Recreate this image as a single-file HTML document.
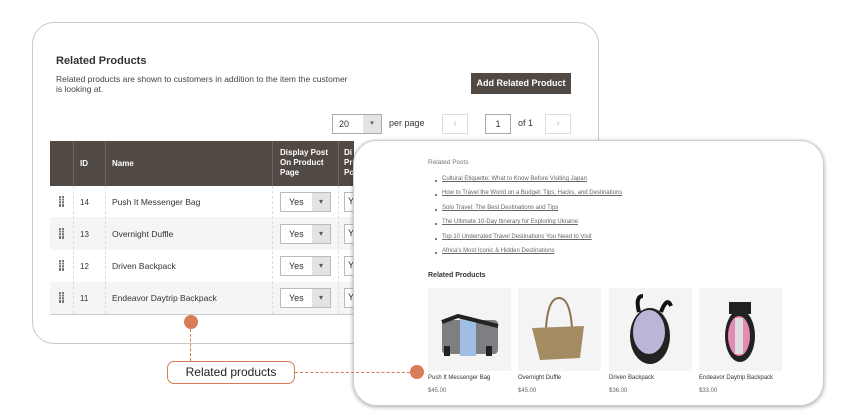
<!DOCTYPE html>
<html><head><meta charset="utf-8"><style>
*{margin:0;padding:0;box-sizing:border-box}
body{width:850px;height:420px;background:#fff;font-family:"Liberation Sans",sans-serif;position:relative;overflow:hidden;color:#333}
.a{position:absolute}
.p1{left:32px;top:22px;width:567px;height:322px;border:1px solid #c9c9c9;border-radius:22px;background:#fff}
.th{background:#514943;color:#fff;font-weight:bold;font-size:8px}
.sel{position:absolute;width:51px;height:20px;border:1px solid #bbb;background:#fff;font-size:9px;line-height:18px;padding-left:8px}
.sel:after{content:"▾";position:absolute;right:0;top:0;width:18px;height:18px;background:#e3e3e3;text-align:center;font-size:8px;color:#555}
.p2{left:353px;top:140px;width:471px;height:266px;border-radius:24px;background:#fff;box-shadow:0 1px 4px rgba(0,0,0,.35);border:1px solid #ccc}
.lk{position:absolute;left:442px;font-size:6px;color:#666;text-decoration:underline}
.bl{position:absolute;left:435px;width:2px;height:2px;background:#555;border-radius:50%}
.img{position:absolute;top:288px;width:83px;height:83px;background:#f4f4f4}
.pn{position:absolute;top:375px;font-size:6px;color:#333}
.pp{position:absolute;top:388px;font-size:6px;color:#666}
.dot{position:absolute;width:14px;height:14px;border-radius:50%;background:#d67c56}
.dr{position:absolute;left:59px}
</style></head><body>
<div class="a p1"></div>
<div class="a" style="left:56px;top:55px;font-size:11px;font-weight:bold;color:#333">Related Products</div>
<div class="a" style="left:56px;top:74px;font-size:8.5px;color:#444;line-height:10px;width:296px">Related products are shown to customers in addition to the item the customer is looking at.</div>
<div class="a" style="left:471px;top:73px;width:100px;height:21px;background:#514943;color:#fff;font-size:9px;font-weight:bold;text-align:center;line-height:21px">Add Related Product</div>
<div class="a" style="left:332px;top:114px;width:50px;height:20px;border:1px solid #aaa;font-size:9px;line-height:18px;padding-left:6px">20<span class="a" style="right:0;top:0;width:18px;height:18px;background:#e3e3e3;text-align:center;font-size:7px;color:#555">▾</span></div>
<div class="a" style="left:389px;top:118px;font-size:9px">per page</div>
<div class="a" style="left:442px;top:114px;width:26px;height:20px;border:1px solid #ddd;color:#bbb;text-align:center;line-height:18px;font-size:10px">‹</div>
<div class="a" style="left:485px;top:114px;width:26px;height:20px;border:1px solid #aaa;text-align:center;line-height:18px;font-size:9px">1</div>
<div class="a" style="left:518px;top:118px;font-size:9px">of 1</div>
<div class="a" style="left:545px;top:114px;width:26px;height:20px;border:1px solid #ddd;color:#bbb;text-align:center;line-height:18px;font-size:10px">›</div>
<div class="a th" style="left:50px;top:141px;width:304px;height:45px"></div>
<div class="a" style="left:73px;top:141px;width:1px;height:45px;background:#6d655f"></div>
<div class="a" style="left:105px;top:141px;width:1px;height:45px;background:#6d655f"></div>
<div class="a" style="left:272px;top:141px;width:1px;height:45px;background:#6d655f"></div>
<div class="a" style="left:338px;top:141px;width:1px;height:45px;background:#6d655f"></div>
<div class="a th" style="left:80px;top:159px">ID</div>
<div class="a th" style="left:112px;top:159px">Name</div>
<div class="a th" style="left:280px;top:148px;line-height:10px">Display Post<br>On Product<br>Page</div>
<div class="a th" style="left:344px;top:148px;line-height:10px">Di<br>Pr<br>Po</div>
<div class="a" style="left:50px;top:217px;width:304px;height:33px;background:#f5f5f5"></div>
<div class="a" style="left:50px;top:282px;width:304px;height:32px;background:#f5f5f5"></div>
<div class="a" style="left:50px;top:314px;width:304px;height:1px;background:#ccc"></div>
<div class="a" style="left:73px;top:186px;width:0;height:128px;border-left:1px dashed #ddd"></div>
<div class="a" style="left:105px;top:186px;width:0;height:128px;border-left:1px dashed #ddd"></div>
<div class="a" style="left:272px;top:186px;width:0;height:128px;border-left:1px dashed #ddd"></div>
<div class="a" style="left:338px;top:186px;width:0;height:128px;border-left:1px dashed #ddd"></div>
<svg class="dr" style="top:196px" width="5" height="11"><g fill="#777"><rect x="0" y="0" width="2" height="11"/><rect x="3" y="0" width="2" height="11"/></g><g fill="#fff"><rect x="0" y="2" width="5" height="0.6"/><rect x="0" y="4.5" width="5" height="0.6"/><rect x="0" y="7" width="5" height="0.6"/></g></svg>
<svg class="dr" style="top:228px" width="5" height="11"><g fill="#777"><rect x="0" y="0" width="2" height="11"/><rect x="3" y="0" width="2" height="11"/></g><g fill="#f5f5f5"><rect x="0" y="2" width="5" height="0.6"/><rect x="0" y="4.5" width="5" height="0.6"/><rect x="0" y="7" width="5" height="0.6"/></g></svg>
<svg class="dr" style="top:260px" width="5" height="11"><g fill="#777"><rect x="0" y="0" width="2" height="11"/><rect x="3" y="0" width="2" height="11"/></g><g fill="#fff"><rect x="0" y="2" width="5" height="0.6"/><rect x="0" y="4.5" width="5" height="0.6"/><rect x="0" y="7" width="5" height="0.6"/></g></svg>
<svg class="dr" style="top:292px" width="5" height="11"><g fill="#777"><rect x="0" y="0" width="2" height="11"/><rect x="3" y="0" width="2" height="11"/></g><g fill="#f5f5f5"><rect x="0" y="2" width="5" height="0.6"/><rect x="0" y="4.5" width="5" height="0.6"/><rect x="0" y="7" width="5" height="0.6"/></g></svg>
<div class="a" style="left:80px;top:198px;font-size:8px">14</div>
<div class="a" style="left:80px;top:230px;font-size:8px">13</div>
<div class="a" style="left:80px;top:262px;font-size:8px">12</div>
<div class="a" style="left:80px;top:294px;font-size:8px">11</div>
<div class="a" style="left:112px;top:197px;font-size:8.5px">Push It Messenger Bag</div>
<div class="a" style="left:112px;top:229px;font-size:8.5px">Overnight Duffle</div>
<div class="a" style="left:112px;top:261px;font-size:8.5px">Driven Backpack</div>
<div class="a" style="left:112px;top:293px;font-size:8.5px">Endeavor Daytrip Backpack</div>
<div class="sel" style="left:280px;top:192px">Yes</div>
<div class="sel" style="left:280px;top:224px">Yes</div>
<div class="sel" style="left:280px;top:256px">Yes</div>
<div class="sel" style="left:280px;top:288px">Yes</div>
<div class="a" style="left:344px;top:192px;width:20px;height:20px;border:1px solid #bbb;background:#fff;font-size:9px;padding:3px 0 0 3px">Y</div>
<div class="a" style="left:344px;top:224px;width:20px;height:20px;border:1px solid #bbb;background:#fff;font-size:9px;padding:3px 0 0 3px">Y</div>
<div class="a" style="left:344px;top:256px;width:20px;height:20px;border:1px solid #bbb;background:#fff;font-size:9px;padding:3px 0 0 3px">Y</div>
<div class="a" style="left:344px;top:288px;width:20px;height:20px;border:1px solid #bbb;background:#fff;font-size:9px;padding:3px 0 0 3px">Y</div>

<div class="a p2"></div>
<div class="a" style="left:428px;top:159px;font-size:6.5px;color:#777">Related Posts</div>
<div class="bl" style="top:180px"></div><div class="lk" style="top:176px">Cultural Etiquette: What to Know Before Visiting Japan</div>
<div class="bl" style="top:194px"></div><div class="lk" style="top:190px">How to Travel the World on a Budget: Tips, Hacks, and Destinations</div>
<div class="bl" style="top:209px"></div><div class="lk" style="top:205px">Solo Travel: The Best Destinations and Tips</div>
<div class="bl" style="top:223px"></div><div class="lk" style="top:219px">The Ultimate 10-Day Itinerary for Exploring Ukraine</div>
<div class="bl" style="top:238px"></div><div class="lk" style="top:234px">Top 10 Underrated Travel Destinations You Need to Visit</div>
<div class="bl" style="top:252px"></div><div class="lk" style="top:248px">Africa's Most Iconic &amp; Hidden Destinations</div>
<div class="a" style="left:428px;top:272px;font-size:7px;font-weight:bold;color:#333">Related Products</div>

<div class="img" style="left:428px"><svg width="83" height="83"><rect x="14" y="32" width="56" height="34" rx="4" fill="#7d7f82"/><rect x="32" y="30" width="16" height="38" fill="#9fc0e4"/><rect x="16" y="58" width="6" height="10" fill="#222"/><rect x="58" y="58" width="6" height="10" fill="#222"/><path d="M14 34 L30 28 L70 38" stroke="#222" stroke-width="4" fill="none"/></svg></div>
<div class="img" style="left:518px"><svg width="83" height="83"><path d="M28 40 Q30 10 41 10 Q52 10 54 40" stroke="#8a7350" stroke-width="2" fill="none"/><path d="M14 40 L66 38 L62 70 L22 72 Z" fill="#a38c62"/></svg></div>
<div class="img" style="left:609px"><svg width="83" height="83"><path d="M30 24 Q26 8 34 8 M52 24 Q58 8 62 18" stroke="#111" stroke-width="4" fill="none"/><ellipse cx="41" cy="48" rx="20" ry="28" fill="#222"/><ellipse cx="40" cy="44" rx="16" ry="22" fill="#b9b6d6"/></svg></div>
<div class="img" style="left:699px"><svg width="83" height="83"><rect x="30" y="14" width="22" height="12" fill="#222"/><ellipse cx="41" cy="48" rx="15" ry="26" fill="#222"/><ellipse cx="40" cy="48" rx="11" ry="20" fill="#e48ab0"/><rect x="36" y="30" width="8" height="36" fill="#ddd"/></svg></div>
<div class="pn" style="left:428px">Push It Messenger Bag</div><div class="pp" style="left:428px">$45.00</div>
<div class="pn" style="left:518px">Overnight Duffle</div><div class="pp" style="left:518px">$45.00</div>
<div class="pn" style="left:609px">Driven Backpack</div><div class="pp" style="left:609px">$36.00</div>
<div class="pn" style="left:699px">Endeavor Daytrip Backpack</div><div class="pp" style="left:699px">$33.00</div>

<div class="dot" style="left:184px;top:315px"></div>
<div class="a" style="left:190px;top:329px;height:32px;border-left:1px dashed #d67c56"></div>
<div class="a" style="left:167px;top:361px;width:128px;height:23px;border:1px solid #d67c56;border-radius:7px;background:#fff;font-size:12px;color:#222;text-align:center;line-height:21px">Related products</div>
<div class="a" style="left:295px;top:372px;width:115px;border-top:1px dashed #d67c56"></div>
<div class="dot" style="left:410px;top:365px"></div>
</body></html>
